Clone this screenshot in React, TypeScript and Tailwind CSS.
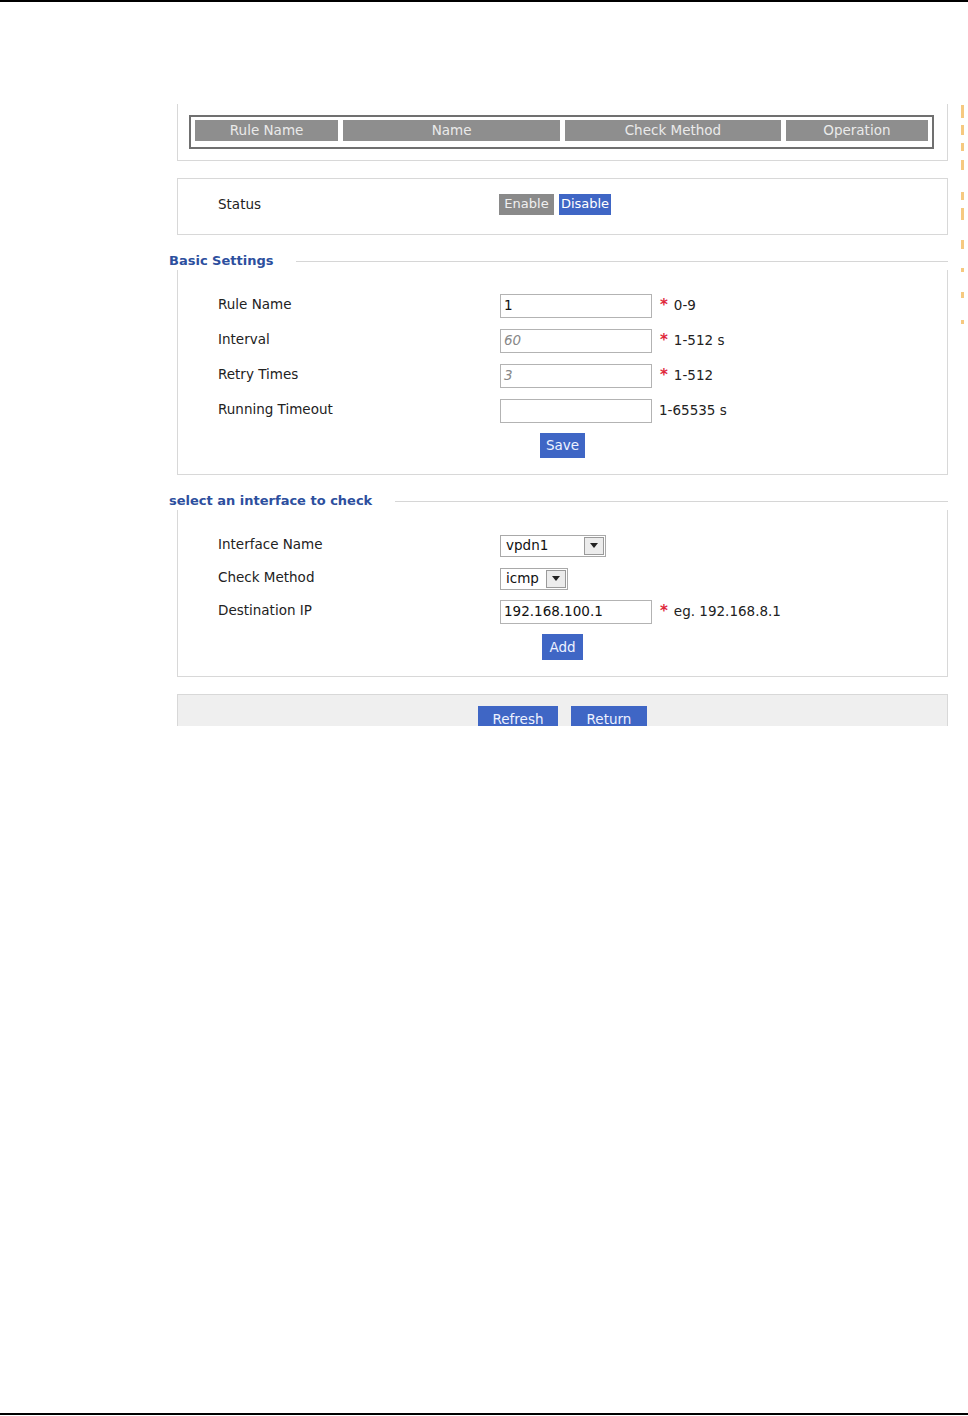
import React from "react";

// Link-check rule editor: rule table, status toggle, basic settings and interface check form.

const font = { fontFamily: '"DejaVu Sans", Verdana, sans-serif' };

function Legend({ title }: { title: string }) {
  return (
    <div className="flex h-[18px] items-center">
      <span className="-ml-[8px] mr-[23px] text-[13px] font-bold text-[#2d4f9e]">{title}</span>
      <div className="h-px flex-1 bg-[#d6d6d6]" />
    </div>
  );
}

function Row({ label, children, h = "h-[35px]" }: { label: string; children: React.ReactNode; h?: string }) {
  return (
    <div className={`flex items-center ${h}`}>
      <div className="w-[322px] pb-[2px] pl-[40px] text-[13.5px] text-[#222]">{label}</div>
      <div className="flex items-center">{children}</div>
    </div>
  );
}

function TextInput({ value, hint, star, placeholder }: { value?: string; hint: string; star?: boolean; placeholder?: string }) {
  return (
    <>
      <div className="flex h-[24px] w-[152px] items-center border border-[#b3b3b3] bg-white px-[3px] text-[13.5px] text-[#111]">
        {value}
        {placeholder && <span className="italic text-[#888]">{placeholder}</span>}
      </div>
      {star ? (
        <span className="ml-[8px] mr-[6px] text-[15px] font-bold text-[#e0283a]">*</span>
      ) : (
        <span className="ml-[7px]" />
      )}
      <span className="text-[13.5px] text-[#222]">{hint}</span>
    </>
  );
}

function Select({ value, w }: { value: string; w: string }) {
  return (
    <div className={`flex h-[22px] items-center justify-between border border-[#a9a9a9] bg-white pl-[5px] pr-px text-[13.5px] text-[#111] ${w}`}>
      <span>{value}</span>
      <span className="flex h-[18px] w-[20px] items-center justify-center border border-[#9a9a9a] bg-[#ececec]">
        <svg width="8" height="5" viewBox="0 0 8 5">
          <path d="M0 0 L8 0 L4 5 Z" fill="#222" />
        </svg>
      </span>
    </div>
  );
}

function BlueButton({ label, className = "" }: { label: string; className?: string }) {
  return (
    <button
      type="button"
      className={`flex items-center justify-center bg-[#3f66c5] text-[13.5px] text-[#eef2ff] ${className}`}
    >
      {label}
    </button>
  );
}

const headers: [string, string][] = [
  ["Rule Name", "w-[144px]"],
  ["Name", "w-[218px]"],
  ["Check Method", "w-[217px]"],
  ["Operation", "w-[143px]"],
];

const orangeMarks = [
  [105, 13], [125, 10], [143, 8], [160, 10], [192, 8], [208, 12], [240, 9], [268, 4], [292, 6], [320, 4],
];

export default function App() {
  return (
    <div className="flex h-[1416px] w-[968px] flex-col bg-white" style={font}>
      <div className="h-[2px] w-full shrink-0 bg-black" />
      <div className="h-[102px] shrink-0" />
      <div className="flex h-[622px] shrink-0 overflow-hidden">
        <div className="w-[177px] shrink-0" />
        <div className="flex w-[771px] shrink-0 flex-col">
          {/* rule list */}
          <div className="h-[57px] shrink-0 border-x border-b border-[#d8d8d8] pl-[11px] pr-[13px] pt-[11px]">
            <div className="flex h-[34px] gap-[5px] border-2 border-[#707070] px-[4px] pt-[3px]">
              {headers.map(([h, w]) => (
                <div
                  key={h}
                  className={`flex h-[21px] items-center justify-center bg-[#8e8e8e] text-[13.5px] text-[#eaeaea] ${w}`}
                >
                  {h}
                </div>
              ))}
            </div>
          </div>

          {/* status */}
          <div className="mt-[17px] flex h-[57px] shrink-0 items-center border border-[#d8d8d8] pb-[5px]">
            <div className="w-[321px] pl-[40px] text-[13.5px] text-[#222]">Status</div>
            <div className="flex gap-[5px]">
              <span className="flex h-[21px] w-[55px] items-center justify-center bg-[#8a8a8a] text-[13px] text-[#f0f0f0]">
                Enable
              </span>
              <span className="flex h-[21px] w-[52px] items-center justify-center bg-[#3f66c5] text-[13px] text-white">
                Disable
              </span>
            </div>
          </div>

          {/* basic settings */}
          <div className="mt-[17px] shrink-0">
            <Legend title="Basic Settings" />
            <div className="border-x border-b border-[#d8d8d8] pb-[16px] pt-[18px]">
              <Row label="Rule Name">
                <TextInput value="1" star hint="0-9" />
              </Row>
              <Row label="Interval">
                <TextInput placeholder="60" star hint="1-512 s" />
              </Row>
              <Row label="Retry Times">
                <TextInput placeholder="3" star hint="1-512" />
              </Row>
              <Row label="Running Timeout">
                <TextInput hint="1-65535 s" />
              </Row>
              <div className="mt-[5px] flex justify-center">
                <BlueButton label="Save" className="h-[25px] w-[45px]" />
              </div>
            </div>
          </div>

          {/* interface check */}
          <div className="mt-[17px] shrink-0">
            <Legend title="select an interface to check" />
            <div className="border-x border-b border-[#d8d8d8] pb-[16px] pt-[19px]">
              <Row label="Interface Name" h="h-[33px]">
                <Select value="vpdn1" w="w-[106px]" />
              </Row>
              <Row label="Check Method" h="h-[33px]">
                <Select value="icmp" w="w-[68px]" />
              </Row>
              <Row label="Destination IP" h="h-[33px]">
                <TextInput value="192.168.100.1" star hint="eg. 192.168.8.1" />
              </Row>
              <div className="mt-[6px] flex justify-center">
                <BlueButton label="Add" className="h-[26px] w-[41px]" />
              </div>
            </div>
          </div>

          {/* footer */}
          <div className="mt-[17px] flex h-[60px] shrink-0 justify-center gap-[13px] border border-[#d8d8d8] bg-[#efefef] pt-[11px]">
            <BlueButton label="Refresh" className="h-[26px] w-[80px]" />
            <BlueButton label="Return" className="h-[26px] w-[76px]" />
          </div>
        </div>
        <div className="w-[12px] shrink-0" />
        <div className="relative w-[8px] shrink-0">
          {orangeMarks.map(([y, h]) => (
            <div
              key={y}
              className="absolute left-[1px] w-[3px] bg-[#f2b24a] opacity-70"
              style={{ top: y - 104, height: h }}
            />
          ))}
        </div>
      </div>
      <div className="flex-1" />
      <div className="mb-px h-[2px] w-full shrink-0 bg-black" />
    </div>
  );
}
